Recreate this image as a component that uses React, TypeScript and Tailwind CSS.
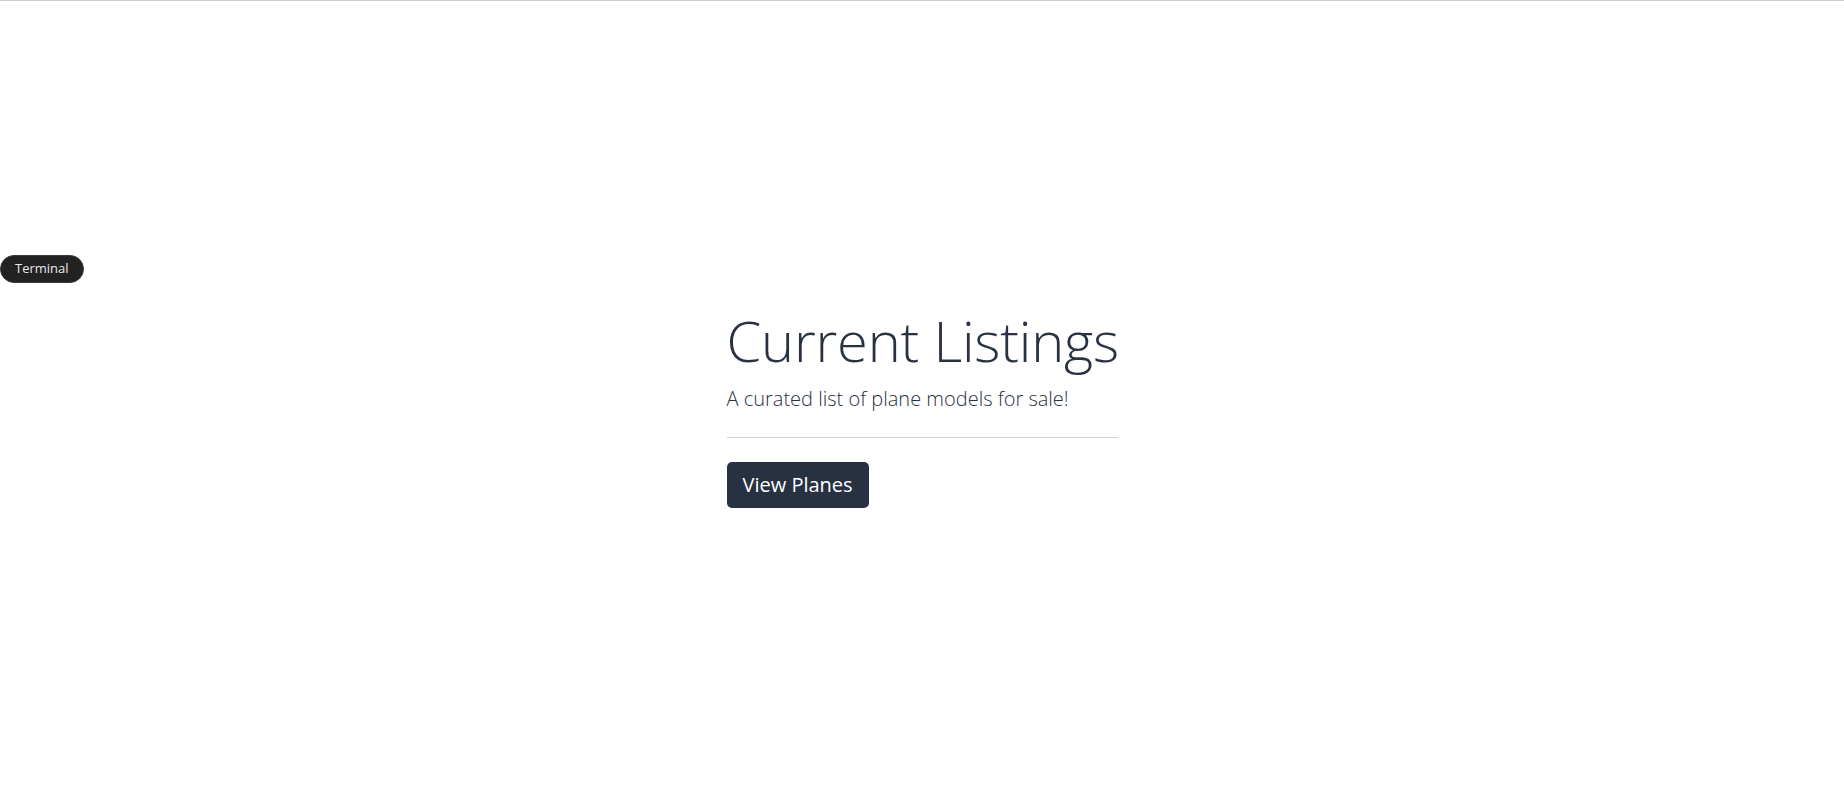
import { FC } from "react"

const TerminalPill: FC = () => (
    <div className="absolute left-0 top-[254px] h-[28px] rounded-full bg-[#222222] border border-[#3a3a3a] px-[14px] flex items-center text-[13px] text-[#e8e8e8] font-['Open_Sans',sans-serif]">
        Terminal
    </div>
)

export default function App() {
    return (
        <div className="relative h-[812px] bg-white border-t border-[#cccccc] font-['Open_Sans','Liberation_Sans',sans-serif] text-[#2a3242]">
            <TerminalPill />
            <div className="flex justify-center pt-[306px]">
                <div className="w-[391px]">
                    <h1 className="text-[56px] font-light leading-[1.2] tracking-[-0.2px] whitespace-nowrap mb-[10px]">Current Listings</h1>
                    <p className="text-[20px] font-light leading-[1.5] mb-[23px]">A curated list of plane models for sale!</p>
                    <hr className="border-t border-[#d0d0d0] mb-[24px]" />
                    <button className="h-[46px] px-[16px] rounded-[5px] bg-[#283142] text-white text-[20px] leading-none">
                        View Planes
                    </button>
                </div>
            </div>
        </div>
    )
}
